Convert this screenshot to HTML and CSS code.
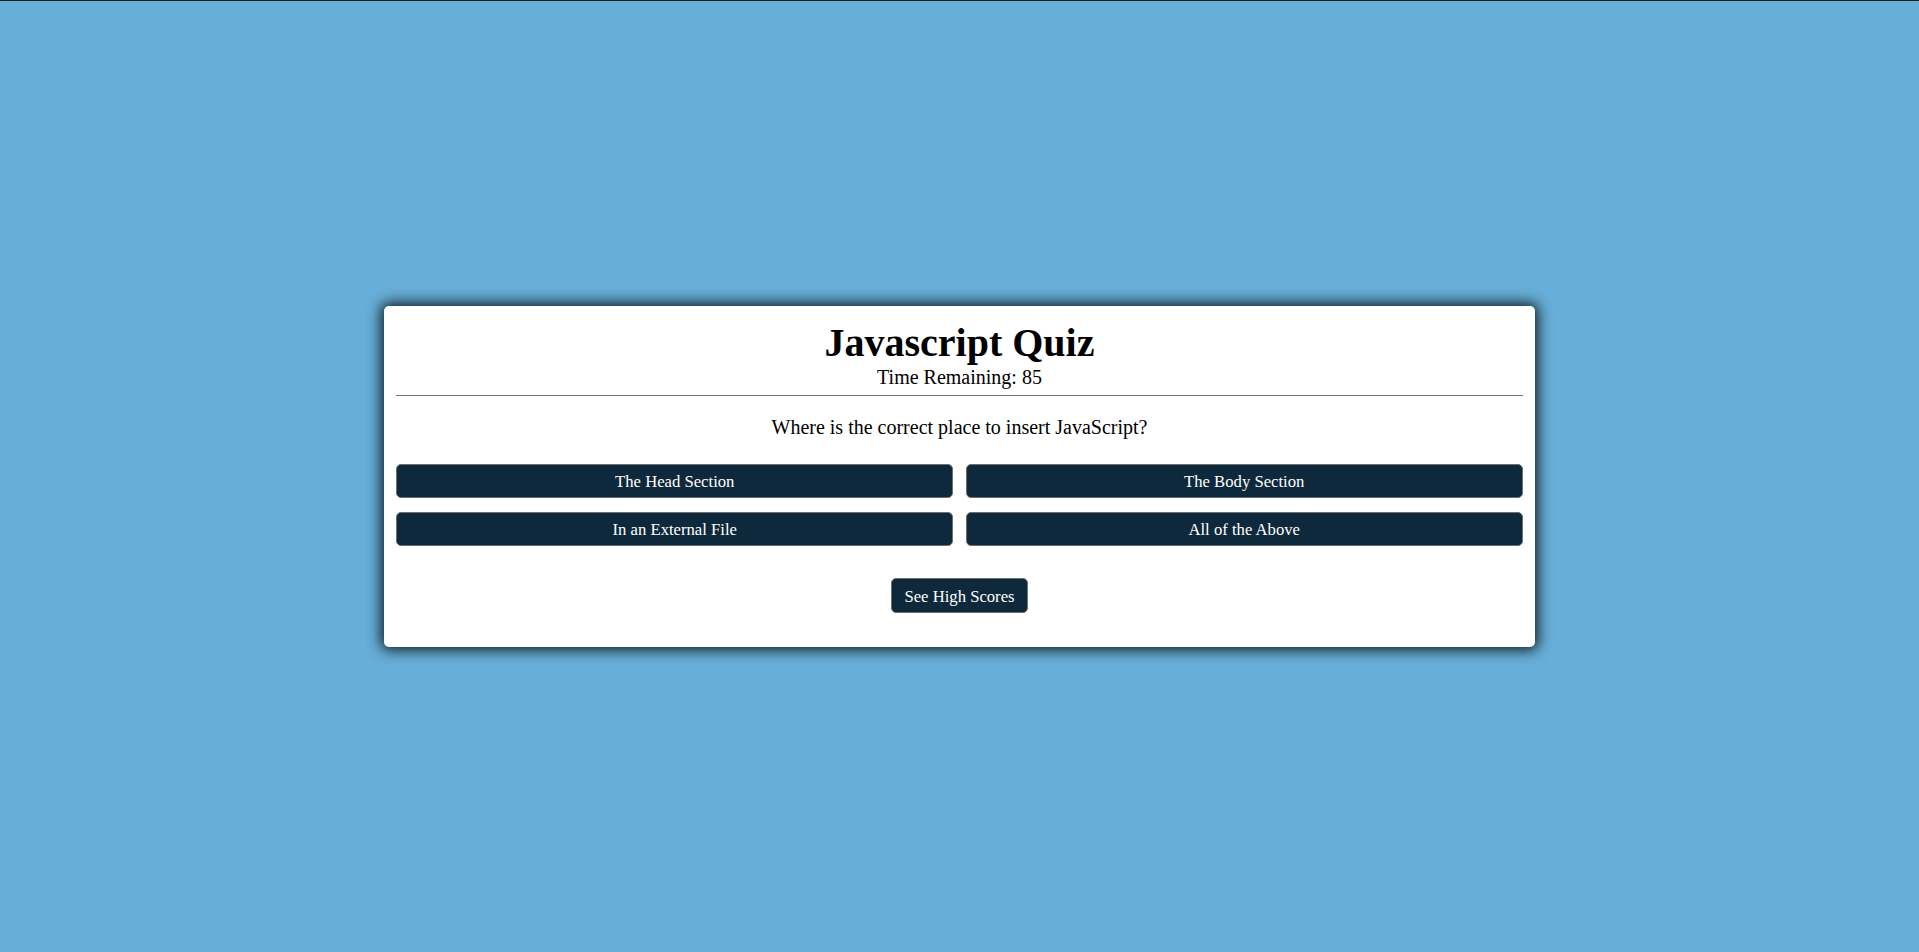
FILE: index.html
```html
<!DOCTYPE html>
<html lang="en">
<head>
<meta charset="utf-8">
<title>Javascript Quiz</title>
<link rel="stylesheet" href="styles.css">
</head>
<body>
<main class="card">
  <header class="head">
    <h1 class="title">Javascript Quiz</h1>
    <p class="timer">Time Remaining: 85</p>
  </header>
  <hr class="rule">
  <p class="question">Where is the correct place to insert JavaScript?</p>
  <div class="options">
    <button class="btn option">The Head Section</button>
    <button class="btn option">The Body Section</button>
    <button class="btn option">In an External File</button>
    <button class="btn option">All of the Above</button>
  </div>
  <div class="footer">
    <button class="btn scores">See High Scores</button>
  </div>
</main>
</body>
</html>
```
FILE: styles.css
```css
html, body {
  margin: 0;
  padding: 0;
}
body {
  background: #67aed8;
  border-top: 1px solid #1c1c1c;
  min-height: calc(100vh - 1px);
  display: flex;
  align-items: center;
  justify-content: center;
  font-family: "Liberation Serif", "Times New Roman", serif;
  color: #000;
}
.card {
  width: 60%;
  box-sizing: border-box;
  background: #fff;
  border-radius: 5px;
  box-shadow: 0 0 14px 3px rgba(0, 0, 0, 0.85);
  padding: 14px 12.5px 34px;
  text-align: center;
}
.title {
  margin: 0;
  font-size: 40px;
  line-height: 46px;
  font-weight: bold;
}
.timer {
  margin: 0;
  font-size: 20px;
  line-height: 23px;
}
.rule {
  margin: 6px 0 0;
  border: 0;
  border-top: 1px solid #747474;
  height: 0;
}
.question {
  margin: 20px 0 0;
  font-size: 20px;
  line-height: 23px;
}
.options {
  margin-top: 25px;
  display: grid;
  grid-template-columns: 1fr 1fr;
  column-gap: 12.5px;
  row-gap: 14px;
}
.btn {
  font-family: "Liberation Serif", "Times New Roman", serif;
  font-size: 16.67px;
  color: #fff;
  background: #0f293c;
  border: 1px solid #6e6e6e;
  border-radius: 5px;
  height: 34px;
  padding-top: 2px;
  display: flex;
  align-items: center;
  justify-content: center;
  box-sizing: border-box;
  margin: 0;
}
.footer {
  margin-top: 32px;
  display: flex;
  justify-content: center;
}
.scores {
  height: 35px;
  padding: 2px 12.5px 0;
}
```
